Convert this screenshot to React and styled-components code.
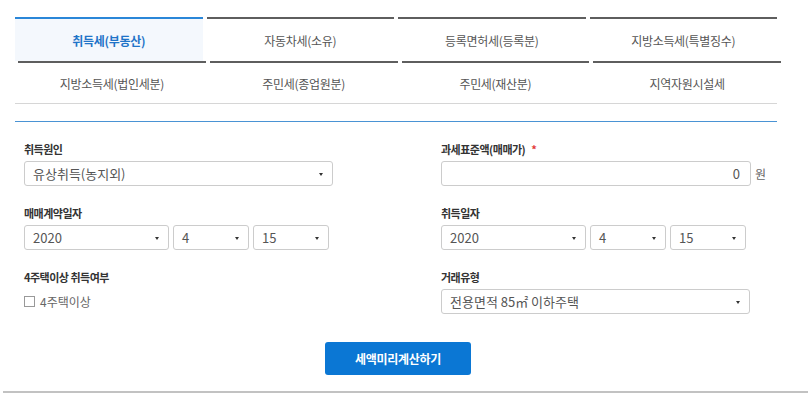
import styled, { createGlobalStyle } from "styled-components"

const GlobalStyle = createGlobalStyle`
    body {
        margin: 0;
        background: #fff;
        font-family: "Noto Sans CJK KR", "Noto Sans", sans-serif;
    }
`

const tabRows = [
    ['취득세(부동산)', '자동차세(소유)', '등록면허세(등록분)', '지방소득세(특별징수)'],
    ['지방소득세(법인세분)', '주민세(종업원분)', '주민세(재산분)', '지역자원시설세'],
]

const App = () => {
    return (
        <Page>
            <GlobalStyle />
            <Container>
                <Tabs>
                    {tabRows.map((row, i) => (
                        <TabRow key={i} $second={i === 1}>
                            {row.map((name, j) => (
                                <Tab key={name} $second={i === 1} $active={i === 0 && j === 0}>{name}</Tab>
                            ))}
                        </TabRow>
                    ))}
                </Tabs>
                <Divider />

                <Form>
                    <Field>
                        <Label>취득원인</Label>
                        <Select $width={309}>유상취득(농지외)</Select>
                    </Field>
                    <Field>
                        <Label>과세표준액(매매가) <Required>*</Required></Label>
                        <AmountRow>
                            <Input>0</Input>
                            <Unit>원</Unit>
                        </AmountRow>
                    </Field>

                    <Field>
                        <Label>매매계약일자</Label>
                        <DateRow>
                            <Select $width={145}>2020</Select>
                            <Select $width={76}>4</Select>
                            <Select $width={76}>15</Select>
                        </DateRow>
                    </Field>
                    <Field>
                        <Label>취득일자</Label>
                        <DateRow>
                            <Select $width={145}>2020</Select>
                            <Select $width={76}>4</Select>
                            <Select $width={76}>15</Select>
                        </DateRow>
                    </Field>

                    <Field>
                        <Label>4주택이상 취득여부</Label>
                        <Check>
                            <Box />
                            4주택이상
                        </Check>
                    </Field>
                    <Field>
                        <Label>거래유형</Label>
                        <Select $width={309}>전용면적 85㎡ 이하주택</Select>
                    </Field>
                </Form>

                <Actions>
                    <Button>세액미리계산하기</Button>
                </Actions>
            </Container>
            <BottomLine />
        </Page>
    )
}

const Page = styled.div`
    width: 811px;
    height: 417px;
    padding-top: 17px;
    box-sizing: border-box;
    overflow: hidden;
`

const Container = styled.div`
    width: 762px;
    margin-left: 15px;
`

const Tabs = styled.div`
    border-bottom: 1px solid #d6d6d6;
`

const TabRow = styled.div`
    display: grid;
    grid-template-columns: repeat(4, 1fr);
    column-gap: 4px;
    margin-left: ${p => p.$second ? '3px' : '0'};
    margin-right: ${p => p.$second ? '-4px' : '0'};
`

const Tab = styled.div`
    height: ${p => p.$second ? '40px' : '42px'};
    display: flex;
    align-items: center;
    justify-content: center;
    border-top: 2px solid ${p => p.$active ? '#2a86d8' : '#5e5e5e'};
    background: ${p => p.$active ? '#f4f8fd' : '#fff'};
    color: ${p => p.$active ? '#1f74c8' : '#555'};
    font-weight: ${p => p.$active ? 700 : 400};
    font-size: 12px;
    letter-spacing: -0.3px;
`

const Divider = styled.div`
    margin-top: 17px;
    border-top: 1px solid #4a93d4;
`

const Form = styled.div`
    display: grid;
    grid-template-columns: 417px 1fr;
    row-gap: 19px;
    padding: 19px 0 0 9px;
`

const Field = styled.div`
    display: flex;
    flex-direction: column;
    gap: 4px;
`

const Label = styled.div`
    font-size: 11px;
    font-weight: 700;
    color: #333;
    line-height: 16px;
    letter-spacing: -0.5px;
`

const Required = styled.span`
    color: #e23b3b;
    margin-left: 4px;
`

const Select = styled.div`
    position: relative;
    width: ${p => p.$width}px;
    height: 25px;
    box-sizing: border-box;
    border: 1px solid #ccc;
    border-radius: 3px;
    padding-left: 8px;
    display: flex;
    align-items: center;
    font-size: 13px;
    color: #555;

    &::after {
        content: "";
        position: absolute;
        right: 9px;
        top: 11px;
        border-left: 2.5px solid transparent;
        border-right: 2.5px solid transparent;
        border-top: 3px solid #333;
    }
`

const DateRow = styled.div`
    display: flex;
    gap: 4px;
`

const AmountRow = styled.div`
    display: flex;
    align-items: center;
    gap: 4px;
`

const Input = styled.div`
    width: 310px;
    height: 25px;
    box-sizing: border-box;
    border: 1px solid #ccc;
    border-radius: 3px;
    padding-right: 10px;
    display: flex;
    align-items: center;
    justify-content: flex-end;
    font-size: 13px;
    color: #555;
`

const Unit = styled.span`
    font-size: 12px;
    color: #666;
`

const Check = styled.label`
    display: flex;
    align-items: center;
    gap: 5px;
    height: 25px;
    font-size: 12px;
    color: #666;
`

const Box = styled.span`
    width: 11px;
    height: 11px;
    border: 1px solid #999;
    box-sizing: border-box;
`

const Actions = styled.div`
    display: flex;
    justify-content: center;
    padding-top: 28px;
    padding-left: 4px;
`

const Button = styled.button`
    width: 146px;
    height: 33px;
    border: none;
    border-radius: 3px;
    background: #0b77d4;
    color: #fff;
    font-family: inherit;
    font-size: 12px;
    font-weight: 700;
    letter-spacing: -0.3px;
`

const BottomLine = styled.div`
    margin: 16px 3px 0;
    border-top: 2px solid #c2c2c2;
`

export default App
